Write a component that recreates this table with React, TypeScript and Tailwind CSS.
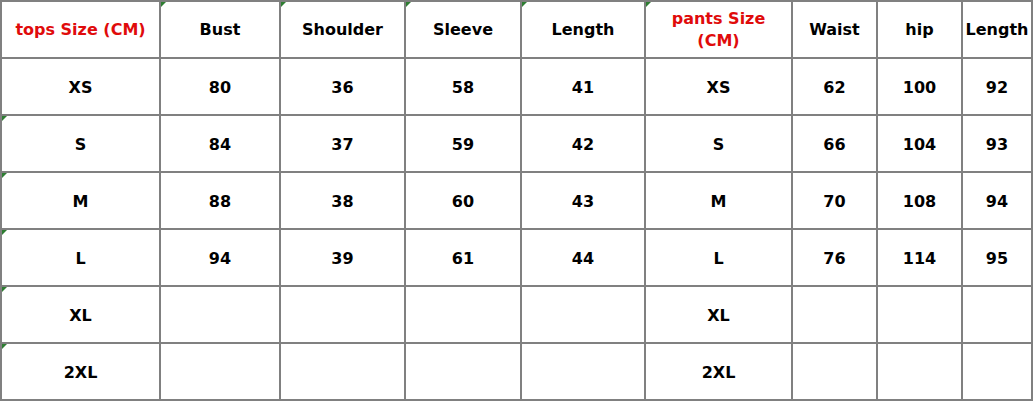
import React from "react";

type Cell = { text?: React.ReactNode; red?: boolean; mark?: boolean };

const header: Cell[] = [
  { text: "tops Size (CM)", red: true },
  { text: "Bust", mark: true },
  { text: "Shoulder", mark: true },
  { text: "Sleeve", mark: true },
  { text: "Length", mark: true },
  {
    text: (
      <span className="leading-[22px] block">
        pants Size
        <br />
        (CM)
      </span>
    ),
    red: true,
    mark: true,
  },
  { text: "Waist" },
  { text: "hip" },
  { text: "Length" },
];

const rows: string[][] = [
  ["XS", "80", "36", "58", "41", "XS", "62", "100", "92"],
  ["S", "84", "37", "59", "42", "S", "66", "104", "93"],
  ["M", "88", "38", "60", "43", "M", "70", "108", "94"],
  ["L", "94", "39", "61", "44", "L", "76", "114", "95"],
  ["XL", "", "", "", "", "XL", "", "", ""],
  ["2XL", "", "", "", "", "2XL", "", "", ""],
];

function Marker() {
  return (
    <span className="absolute left-0 top-0 h-0 w-0 border-t-[5px] border-r-[5px] border-t-[#2e7d32] border-r-transparent" />
  );
}

function TableCell({ cell }: { cell: Cell }) {
  return (
    <div
      className={`relative flex items-center justify-center bg-white text-center text-[16px] font-bold ${
        cell.red ? "text-[#e00b0b]" : "text-black"
      }`}
    >
      {cell.mark && <Marker />}
      {cell.text}
    </div>
  );
}

export default function App() {
  return (
    <div
      className="h-[403px] w-[1034px] bg-white"
      style={{ fontFamily: '"DejaVu Sans", Verdana, sans-serif' }}
    >
      <div className="inline-grid grid-cols-[157px_118px_123px_114px_122px_145px_83px_83px_68px] grid-rows-[repeat(7,55px)] gap-[2px] bg-[#808080] p-[2px]">
        {header.map((c, i) => (
          <TableCell key={`h${i}`} cell={c} />
        ))}
        {rows.map((r, ri) =>
          r.map((t, ci) => (
            <div
              key={`${ri}-${ci}`}
              className="relative flex items-center justify-center bg-white pt-[2px] text-center text-[16px] font-bold text-black"
            >
              {ci === 0 && ri > 0 && <Marker />}
              {t}
            </div>
          ))
        )}
      </div>
    </div>
  );
}
